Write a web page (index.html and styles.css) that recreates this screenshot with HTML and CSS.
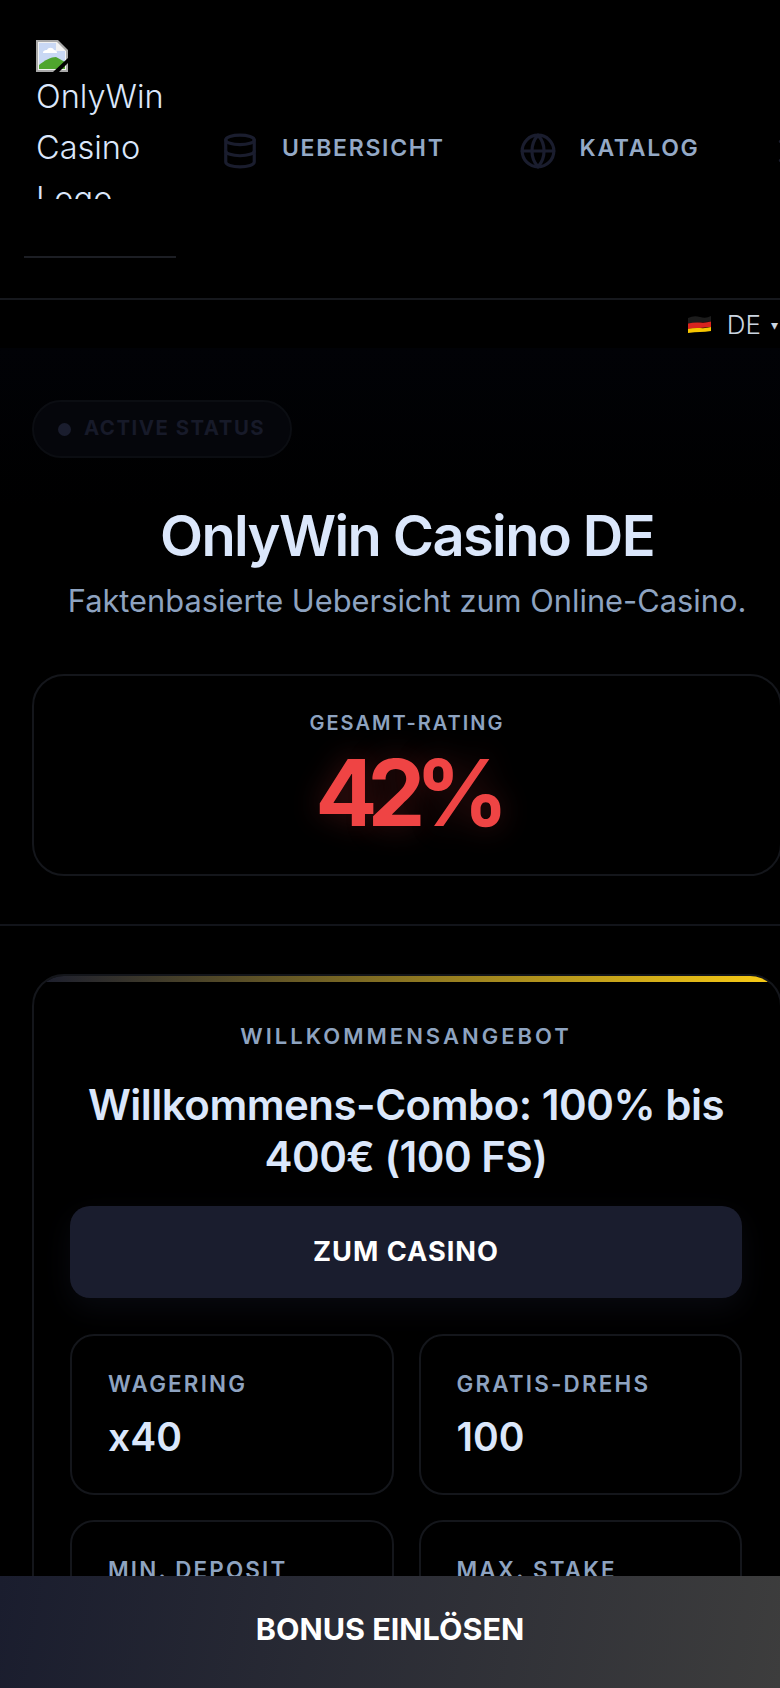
FILE: index.html
```html
<!DOCTYPE html>
<html lang="de">

<head>
    <meta charset="UTF-8">
    <meta name="viewport" content="width=device-width, initial-scale=1.0">
    <title>OnlyWin Casino DE</title>
    <link rel="stylesheet" href="styles.css">
</head>

<body>
    <div class="page">
        <header class="site-header">
            <div class="logo-box">
                <div class="logo-alt">
                    <svg class="broken-img" viewBox="0 0 32 32" width="32" height="32">
                        <path d="M0 0H22L32 10V32H0Z" fill="#a9a9a9" />
                        <path d="M2 2H21L30 11V30H2Z" fill="#f2f2f2" />
                        <path d="M3 3H20V11H29V29H3Z" fill="#c9d8f4" />
                        <path d="M7 13c0-3 3-3 4-3c1-3 6-3 7 0c2 0 3 1 3 3Z" fill="#fff" />
                        <path d="M3 29V25C9 20 15 17 20 17L29 22V29Z" fill="#4fa52e" />
                        <path d="M17 32L32 18V23L23 32Z" fill="#000" />
                    </svg>
                    OnlyWin Casino Logo
                </div>
            </div>
            <nav class="main-nav">
                <a class="nav-item">
                    <svg class="nav-icon" viewBox="0 0 24 24">
                        <ellipse cx="12" cy="5" rx="9" ry="3" />
                        <path d="M3 5V19A9 3 0 0 0 21 19V5" />
                        <path d="M3 12A9 3 0 0 0 21 12" />
                    </svg>
                    <span>UEBERSICHT</span>
                </a>
                <a class="nav-item">
                    <svg class="nav-icon" viewBox="0 0 24 24">
                        <circle cx="12" cy="12" r="10" />
                        <path d="M12 2a15 15 0 0 1 0 20a15 15 0 0 1 0-20" />
                        <path d="M2 12H22" />
                    </svg>
                    <span>KATALOG</span>
                </a>
                <a class="nav-item">
                    <svg class="nav-icon" viewBox="0 0 24 24">
                        <path d="M4 6H20M4 18H20" />
                    </svg>
                </a>
            </nav>
        </header>

        <div class="lang-row">
            <div class="lang-switch">
                <svg class="flag" viewBox="0 0 23 18" width="23" height="18">
                    <path d="M0 3Q6 0 12 2T23 1V6.500Q17 7 12 7.500T0 8.500Z" fill="#1c1c1c" />
                    <path d="M0 8.500Q6 7 12 7.500T23 6.500V12Q17 12.500 12 13T0 14Z" fill="#d8241f" />
                    <path d="M0 14Q6 12.500 12 13T23 12V16Q17 17 12 17T0 18Z" fill="#f7c600" />
                </svg>
                <span class="lang-code">DE</span>
                <span class="lang-arrow">▾</span>
            </div>
        </div>

        <section class="hero">
            <div class="status-pill"><span class="status-dot"></span>ACTIVE STATUS</div>
            <h1>OnlyWin Casino DE</h1>
            <p class="hero-sub">Faktenbasierte Uebersicht zum Online-Casino.</p>
            <div class="rating-card">
                <div class="rating-label">GESAMT-RATING</div>
                <div class="rating-value">42%</div>
            </div>
        </section>

        <section class="offer">
            <div class="offer-card">
                <div class="offer-label">WILLKOMMENSANGEBOT</div>
                <h2>Willkommens-Combo: 100% bis 400€ (100 FS)</h2>
                <a class="offer-btn">ZUM CASINO</a>
                <div class="stats">
                    <div class="stat">
                        <div class="stat-label">WAGERING</div>
                        <div class="stat-value">x40</div>
                    </div>
                    <div class="stat">
                        <div class="stat-label">GRATIS-DREHS</div>
                        <div class="stat-value">100</div>
                    </div>
                    <div class="stat">
                        <div class="stat-label">MIN. DEPOSIT</div>
                    </div>
                    <div class="stat">
                        <div class="stat-label">MAX. STAKE</div>
                    </div>
                </div>
            </div>
        </section>
    </div>

    <a class="sticky-cta">BONUS EINLÖSEN</a>
</body>

</html>
```

FILE: styles.css
```css
* {
    box-sizing: border-box;
}

html,
body {
    margin: 0;
    padding: 0;
    background: #000;
    height: 1688px;
    overflow: hidden;
}

body {
    font-family: Inter, "Liberation Sans", sans-serif;
    color: #dbe7fb;
}

.page {
    width: 814px;
    height: 1688px;
    overflow: hidden;
}

.site-header {
    display: flex;
    align-items: flex-start;
    height: 300px;
    padding: 24px 0 0 24px;
    border-bottom: 2px solid #16181d;
}

.logo-box {
    width: 152px;
    height: 234px;
    flex-shrink: 0;
    border-bottom: 2px solid #1c1e24;
}

.logo-alt {
    width: 140px;
    height: 159px;
    margin: 16px 0 0 12px;
    overflow: hidden;
    font-size: 32.5px;
    font-weight: 300;
    line-height: 51px;
    color: #dbe7fb;
}

.broken-img {
    display: block;
    margin-bottom: -1px;
}

.main-nav {
    display: flex;
    gap: 74px;
    margin: 102px 0 0 45px;
    white-space: nowrap;
}

.nav-item {
    display: flex;
    align-items: center;
    gap: 23px;
    font-size: 23px;
    font-weight: 600;
    letter-spacing: 1.7px;
    color: #94a9c6;
}

.nav-icon {
    width: 38px;
    height: 38px;
    margin-top: 6px;
    fill: none;
    stroke: #1a1d2e;
    stroke-width: 2;
    stroke-linecap: round;
    stroke-linejoin: round;
    flex-shrink: 0;
}

.lang-row {
    display: flex;
    justify-content: flex-end;
    width: 780px;
    height: 48px;
    padding-right: 2px;
}

.lang-switch {
    display: flex;
    align-items: center;
    height: 48px;
    color: #cbd5e1;
}

.flag {
    margin-right: 16px;
}

.lang-code {
    font-size: 26px;
    font-weight: 300;
}

.lang-arrow {
    margin-left: 10px;
    font-size: 14px;
}

.hero {
    padding: 52px 32px 48px;
    border-bottom: 2px solid #12141a;
    background: linear-gradient(#010206, #000 160px);
}

.status-pill {
    display: flex;
    align-items: center;
    width: 260px;
    height: 58px;
    padding: 0 0 4px 24px;
    border: 2px solid #0b0d12;
    border-radius: 29px;
    background: #05060b;
    font-size: 20.4px;
    font-weight: 700;
    letter-spacing: 1.5px;
    color: #171a29;
}

.status-dot {
    width: 13px;
    height: 13px;
    margin: 4px 13px 0 0;
    border-radius: 50%;
    background: #1a1d2e;
}

h1 {
    margin: 46px 0 0;
    font-size: 56px;
    font-weight: 600;
    line-height: 64px;
    letter-spacing: -1.6px;
    text-align: center;
    color: #dbe7fb;
}

.hero-sub {
    margin: 12px 0 0;
    font-size: 30.8px;
    line-height: 42px;
    text-align: center;
    color: #8ea3c0;
}

.rating-card {
    height: 202px;
    margin-top: 52px;
    padding-top: 35px;
    border: 2px solid #14161b;
    border-radius: 32px;
    text-align: center;
}

.rating-label {
    font-size: 20px;
    font-weight: 600;
    line-height: 24px;
    letter-spacing: 2px;
    color: #8ea3c0;
}

.rating-value {
    margin-top: 6px;
    font-size: 92px;
    font-weight: 700;
    line-height: 104px;
    letter-spacing: -10px;
    color: #ef4444;
    text-shadow: 0 0 30px rgba(239, 68, 68, 0.25);
}

.offer {
    padding: 48px 32px 0;
}

.offer-card {
    position: relative;
    height: 900px;
    padding: 47px 38px 0 36px;
    overflow: hidden;
    border: 2px solid #14161b;
    border-radius: 32px;
}

.offer-card::before {
    content: "";
    position: absolute;
    top: 0;
    left: 0;
    right: 0;
    height: 6px;
    background: linear-gradient(90deg, #1a1d2e, #facc15);
}

.offer-label {
    font-size: 22px;
    font-weight: 600;
    line-height: 26px;
    letter-spacing: 3px;
    text-align: center;
    color: #8ea3c0;
}

h2 {
    margin: 30px 0 0;
    font-size: 42px;
    font-weight: 600;
    line-height: 52px;
    letter-spacing: -0.5px;
    text-align: center;
    color: #dbe7fb;
}

.offer-btn {
    display: flex;
    align-items: center;
    justify-content: center;
    height: 92px;
    margin-top: 23px;
    padding-bottom: 2px;
    border-radius: 20px;
    background: #1a1d2e;
    font-size: 27.2px;
    font-weight: 700;
    letter-spacing: 1px;
    color: #fff;
    box-shadow: 0 10px 30px rgba(26, 29, 46, 0.35);
}

.stats {
    display: grid;
    grid-template-columns: 1fr 1fr;
    gap: 25px;
    margin-top: 36px;
}

.stat {
    height: 161px;
    padding: 35px 36px 0;
    border: 2px solid #14161b;
    border-radius: 24px;
}

.stat-label {
    font-size: 22.4px;
    font-weight: 600;
    line-height: 26px;
    letter-spacing: 2.2px;
    color: #8ea3c0;
}

.stat-value {
    margin-top: 17px;
    font-size: 39px;
    font-weight: 600;
    line-height: 46px;
    color: #dbe7fb;
}

.sticky-cta {
    position: fixed;
    left: 0;
    right: 0;
    bottom: 0;
    display: flex;
    align-items: center;
    justify-content: center;
    height: 112px;
    padding-bottom: 8px;
    background: linear-gradient(100deg, #1a1d2e, #3d3d3d);
    font-size: 30.5px;
    font-weight: 700;
    color: #fff;
}
```
